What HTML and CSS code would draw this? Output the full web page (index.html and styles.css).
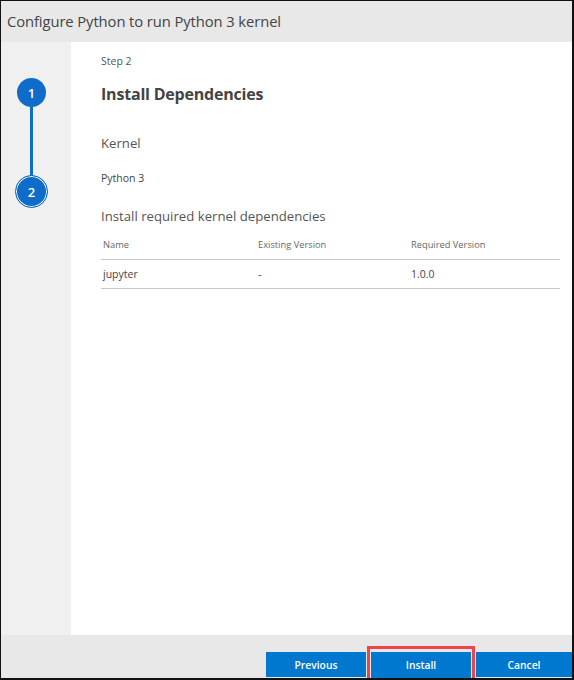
FILE: index.html
```html
<!DOCTYPE html>
<html>
<head>
<meta charset="utf-8">
<link rel="stylesheet" href="styles.css">
</head>
<body>
<div class="dialog">
  <div class="header">Configure Python to run Python 3 kernel</div>
  <div class="main">
    <div class="steps">
      <div class="step done">1</div>
      <div class="connector"></div>
      <div class="step current"><span>2</span></div>
    </div>
    <div class="content">
      <div class="step-label">Step 2</div>
      <h1 class="title">Install Dependencies</h1>
      <div class="section">Kernel</div>
      <div class="kernel">Python 3</div>
      <div class="section deps">Install required kernel dependencies</div>
      <div class="table">
        <div class="row head">
          <div class="c1">Name</div>
          <div class="c2">Existing Version</div>
          <div class="c3">Required Version</div>
        </div>
        <div class="row">
          <div class="c1">jupyter</div>
          <div class="c2">-</div>
          <div class="c3">1.0.0</div>
        </div>
      </div>
    </div>
  </div>
  <div class="footer">
    <button class="btn">Previous</button>
    <div class="highlight"><button class="btn">Install</button></div>
    <button class="btn">Cancel</button>
  </div>
</div>
</body>
</html>
```
FILE: styles.css
```css
* { box-sizing: border-box; }
html, body { margin: 0; padding: 0; }
body {
  width: 574px;
  height: 680px;
  font-family: "Open Sans", "Noto Sans", sans-serif;
  color: #333;
  background: #fff;
}
.dialog {
  width: 574px;
  height: 680px;
  border-top: 1px solid #111;
  border-left: 1px solid #111;
  border-right: 2px solid #111;
  border-bottom: 2px solid #111;
  display: flex;
  flex-direction: column;
  background: #fff;
}
.header {
  height: 41px;
  flex: none;
  background: #e8e8e8;
  font-size: 14.8px;
  line-height: 41px;
  padding-left: 6px;
  color: #444;
  letter-spacing: -0.1px;
}
.main {
  flex: 1;
  display: flex;
  min-height: 0;
}
.steps {
  width: 70px;
  flex: none;
  background: #f0f0f0;
  display: flex;
  flex-direction: column;
  align-items: center;
  padding-top: 36px;
  padding-right: 9px;
}
.step {
  width: 29px;
  height: 29px;
  border-radius: 50%;
  background: #0f6cc9;
  color: #fff;
  font-size: 13px;
  font-weight: 600;
  display: flex;
  align-items: center;
  justify-content: center;
  flex: none;
}
.connector {
  width: 3px;
  height: 69px;
  background: #0f6cc9;
  margin-top: 0;
  margin-bottom: -1px;
}
.step.current {
  width: 33px;
  height: 33px;
  background: #0f6cc9;
  padding: 0;
  border: 1.5px solid #0f6cc9;
  box-shadow: inset 0 0 0 1px #fff;
}
.content {
  flex: 1;
  padding: 12px 12px 0 30px;
}
.step-label {
  font-size: 10.5px;
  color: #555;
  line-height: 14px;
}
.title {
  margin: 16px 0 0 0;
  font-size: 16px;
  font-weight: 700;
  color: #444;
  line-height: 20px;
  letter-spacing: -0.2px;
}
.section {
  margin-top: 30px;
  font-size: 13.2px;
  color: #555;
  line-height: 18px;
}
.kernel {
  margin-top: 19px;
  font-size: 10.5px;
  color: #444;
  line-height: 14px;
}
.section.deps {
  margin-top: 22px;
}
.table {
  margin-top: 12px;
  width: 459px;
}
.row {
  display: flex;
  height: 29px;
  align-items: center;
  border-bottom: 1px solid #c8c8c8;
  font-size: 10.5px;
  color: #444;
}
.row.head {
  height: 23px;
  align-items: flex-start;
  padding-top: 1px;
  font-size: 9.3px;
  color: #666;
}
.c1 { width: 155px; padding-left: 2px; }
.c2 { width: 153px; padding-left: 2px; }
.c3 { flex: 1; padding-left: 2px; }
.footer {
  height: 43px;
  flex: none;
  background: #e8e8e8;
  display: flex;
  align-items: flex-end;
  justify-content: flex-end;
}
.btn {
  width: 100px;
  height: 25px;
  border: none;
  background: #0078d0;
  color: #fff;
  font-family: "Open Sans", "Noto Sans", sans-serif;
  font-size: 10.3px;
  font-weight: 600;
  padding: 0;
  margin: 0 0 1px 0;
}
.footer > .btn:first-child { margin-right: 1px; }
.footer > .btn:last-child { width: 96px; margin-left: 1px; }
.highlight {
  border: 3px solid #f0434a;
  border-bottom: none;
  padding: 1px 1px 0 1px;
  height: 32px;
  display: flex;
  align-items: flex-end;
}
.highlight .btn { margin: 0; height: 26px; }
```
